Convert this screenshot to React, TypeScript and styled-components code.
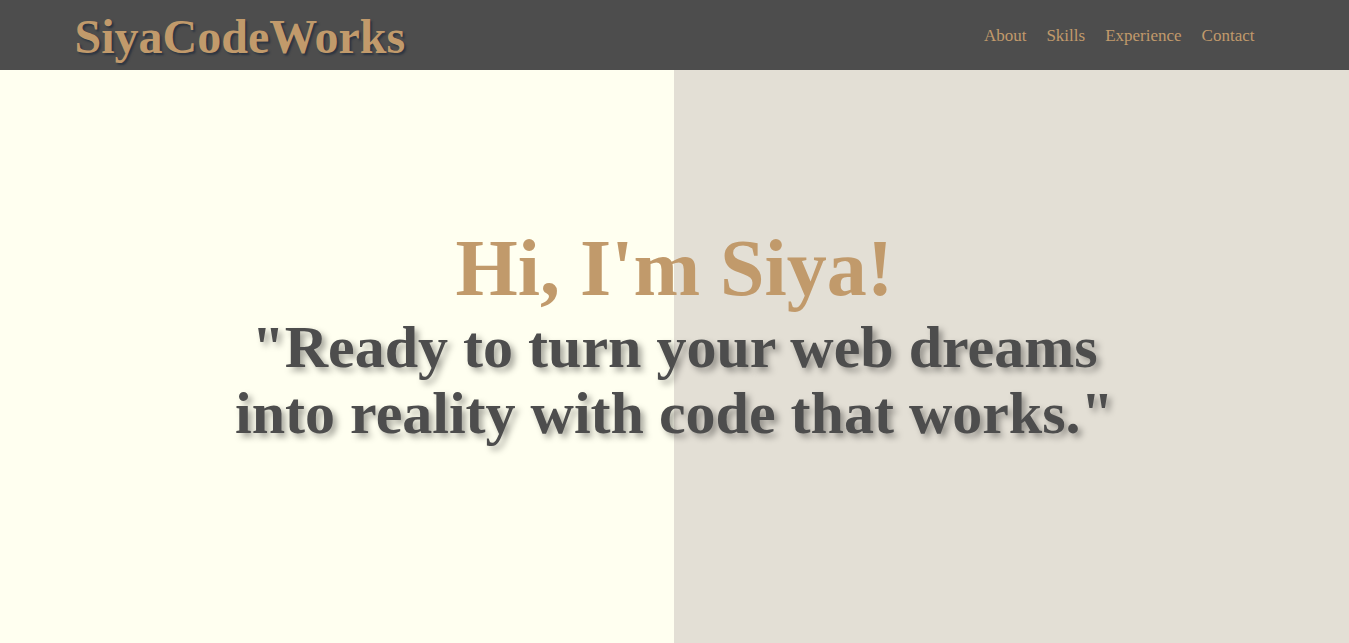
import React from "react";
import styled, { createGlobalStyle } from "styled-components";

const Global = createGlobalStyle`
  html, body { margin: 0; padding: 0; }
  body { font-family: "Liberation Serif", "Times New Roman", serif; background: #fffff0; }
  * { box-sizing: border-box; }
`;

const Header = styled.header`
  height: 70px;
  background: #4d4d4d;
`;

const HeaderInner = styled.div`
  width: 1200px;
  height: 100%;
  margin: 0 auto;
  display: flex;
  align-items: center;
  justify-content: space-between;
`;

const Logo = styled.div`
  font-size: 48px;
  font-weight: bold;
  color: #c19a6b;
  text-shadow: 2px 2px 2px #2c3440;
  line-height: 1;
  margin-top: 4px;
`;

const Nav = styled.nav`
  display: flex;
  gap: 20px;
  padding-right: 20px;
  margin-top: 2px;
`;

const NavLink = styled.a`
  font-size: 17px;
  color: #c19a6b;
  text-decoration: none;
  cursor: pointer;
`;

const Hero = styled.main`
  height: 573px;
  background: linear-gradient(to right, #fffff0 674px, #e3dfd5 674px);
  display: flex;
  flex-direction: column;
  align-items: center;
  justify-content: center;
  padding-bottom: 44px;
  text-align: center;
`;

const Title = styled.h1`
  margin: 0;
  font-size: 80px;
  font-weight: bold;
  color: #c19a6b;
  line-height: normal;
`;

const Quote = styled.p`
  margin: 0;
  max-width: 920px;
  font-size: 60px;
  font-weight: bold;
  color: #4d4d4d;
  line-height: 66px;
  text-shadow: 4px 4px 6px rgba(0, 0, 0, 0.35);
`;

export default function App() {
  const links = ["About", "Skills", "Experience", "Contact"];
  return (
    <>
      <Global />
      <Header>
        <HeaderInner>
          <Logo>SiyaCodeWorks</Logo>
          <Nav>
            {links.map((l) => (
              <NavLink key={l}>{l}</NavLink>
            ))}
          </Nav>
        </HeaderInner>
      </Header>
      <Hero>
        <Title>Hi, I'm Siya!</Title>
        <Quote>"Ready to turn your web dreams into reality with code that works."</Quote>
      </Hero>
    </>
  );
}
